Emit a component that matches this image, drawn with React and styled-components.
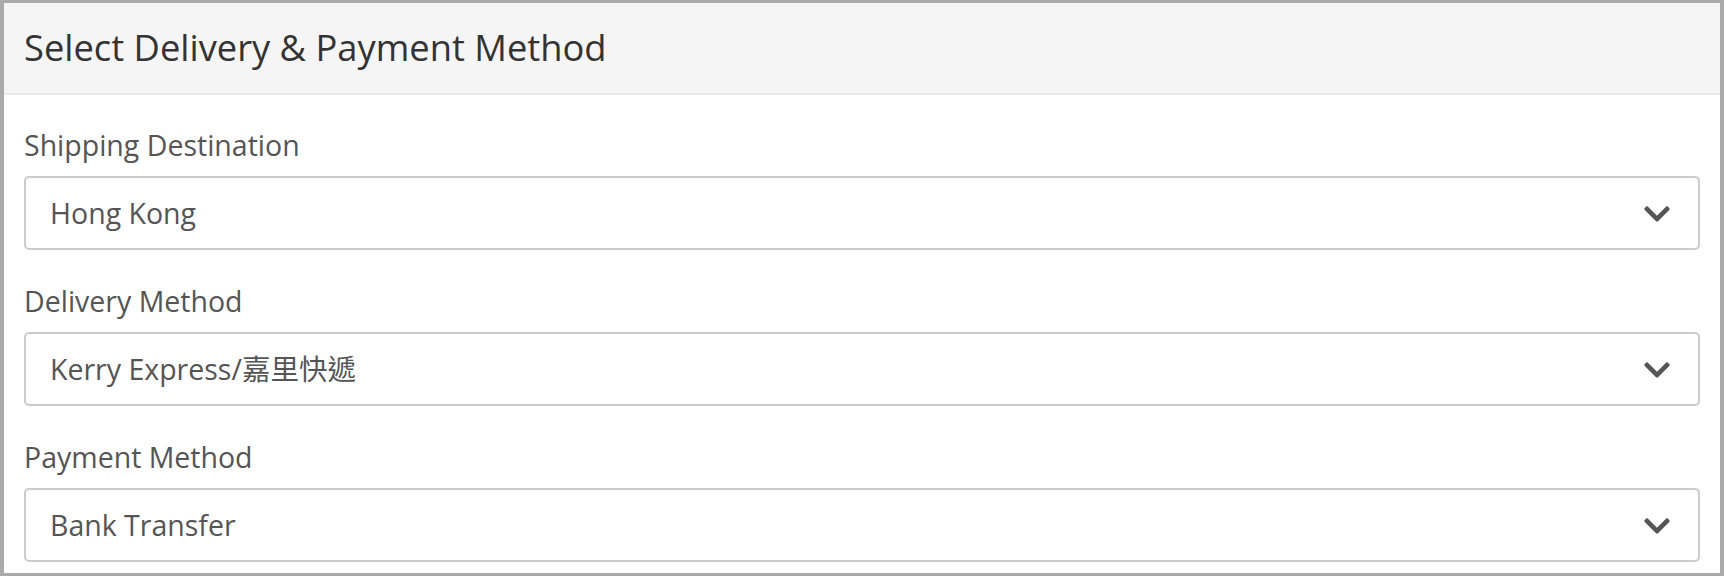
import React from "react";
import styled, { createGlobalStyle } from "styled-components";
import { FaChevronDown } from "react-icons/fa";

const Global = createGlobalStyle`
  html, body { margin: 0; padding: 0; background: #fff; }
  body { font-family: "Open Sans", "Noto Sans CJK TC", sans-serif; }
  * { box-sizing: border-box; }
`;

const Panel = styled.div`
  width: 1724px;
  height: 576px;
  border-style: solid;
  border-color: #aaaaaa;
  border-width: 3px 4px 3px 4px;
  display: flex;
  flex-direction: column;
  overflow: hidden;
`;

const Header = styled.div`
  height: 92px;
  flex: none;
  background: #f5f5f5;
  border-bottom: 2px solid #e9e9e9;
  display: flex;
  align-items: center;
  padding: 0 20px 2px;
`;

const Title = styled.h3`
  margin: 0;
  font-weight: 400;
  font-size: 36.3px;
  line-height: 49px;
  color: #333;
`;

const Body = styled.div`
  padding: 30px 20px 0;
  display: flex;
  flex-direction: column;
  gap: 31px;
`;

const Field = styled.div`
  display: flex;
  flex-direction: column;
`;

const Label = styled.label`
  font-size: 28.5px;
  line-height: 40px;
  color: #555;
  margin-bottom: 11px;
`;

const SelectBox = styled.div`
  height: 74px;
  border: 2px solid #cccccc;
  border-radius: 5px;
  display: flex;
  align-items: center;
  justify-content: space-between;
  padding: 0 28px 0 24px;
  color: #555;
  font-size: 28.5px;
  line-height: 38px;
`;

const Value = styled.span`
  white-space: nowrap;
`;

const Chevron = styled(FaChevronDown)`
  color: #555;
  width: 26px;
  height: 30px;
  flex: none;
  margin-top: 2px;
`;

const fields = [
  { label: "Shipping Destination", value: "Hong Kong" },
  { label: "Delivery Method", value: "Kerry Express/嘉里快遞" },
  { label: "Payment Method", value: "Bank Transfer" },
];

export default function App() {
  return (
    <>
      <Global />
      <Panel>
        <Header>
          <Title>Select Delivery &amp; Payment Method</Title>
        </Header>
        <Body>
          {fields.map((f) => (
            <Field key={f.label}>
              <Label>{f.label}</Label>
              <SelectBox>
                <Value>{f.value}</Value>
                <Chevron />
              </SelectBox>
            </Field>
          ))}
        </Body>
      </Panel>
    </>
  );
}
